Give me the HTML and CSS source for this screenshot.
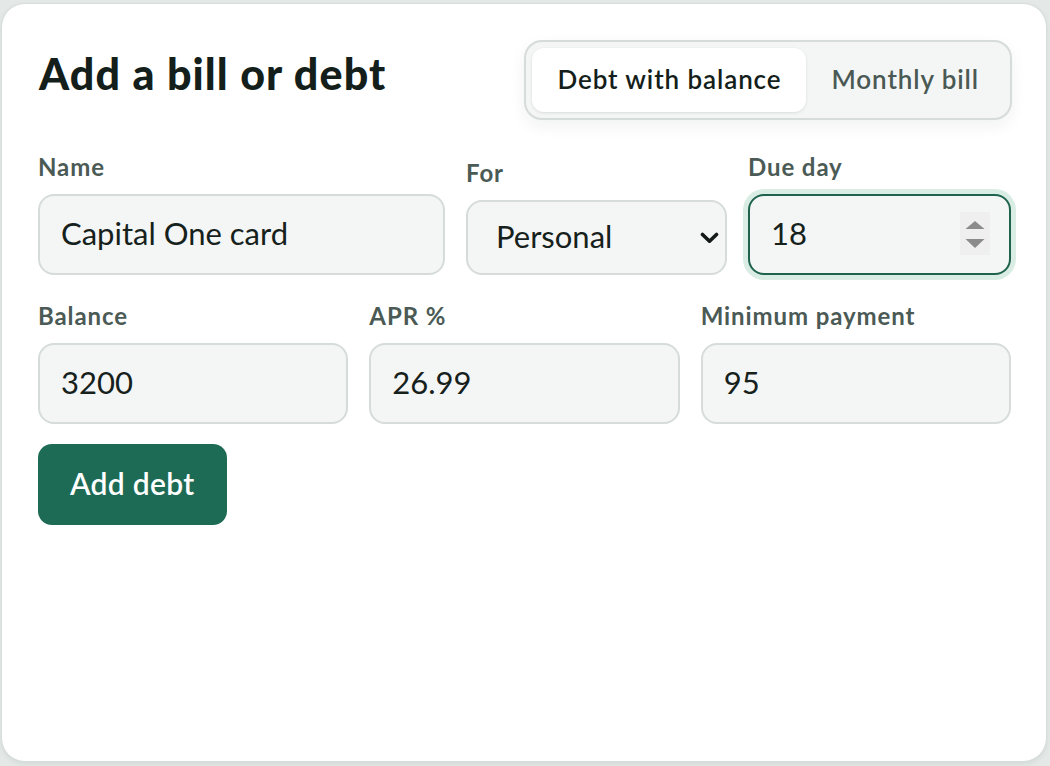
FILE: index.html
```html
<!DOCTYPE html>
<html lang="en">
<head>
<meta charset="utf-8">
<title>Add a bill or debt</title>
<link rel="stylesheet" href="styles.css">
</head>
<body>
<div class="card">
  <div class="header">
    <h1 class="title">Add a bill or debt</h1>
    <div class="seg">
      <button class="seg-btn active" type="button">Debt with balance</button>
      <button class="seg-btn" type="button">Monthly bill</button>
    </div>
  </div>

  <div class="row row-top">
    <div class="field">
      <label class="label" for="name">Name</label>
      <input class="input" id="name" type="text" value="Capital One card">
    </div>
    <div class="field">
      <label class="label" for="for">For</label>
      <div class="select-wrap">
        <select class="input select" id="for">
          <option>Personal</option>
          <option>Business</option>
        </select>
        <svg class="chev" width="19" height="12" viewBox="0 0 19 12" aria-hidden="true">
          <path d="M2.5 2.5 L9.5 9.2 L16.5 2.5" fill="none" stroke="#141a17" stroke-width="3.6" stroke-linecap="round" stroke-linejoin="round"/>
        </svg>
      </div>
    </div>
    <div class="field">
      <label class="label" for="due">Due day</label>
      <div class="num-wrap">
        <input class="input input-focus" id="due" type="text" value="18">
        <svg class="spin" width="30" height="43" viewBox="0 0 30 43" aria-hidden="true">
          <rect x="0" y="0" width="30" height="43" fill="#efefef"/>
          <polygon points="5.5,17 24.5,17 15,9" fill="#8b8b8b"/>
          <polygon points="5.5,27 24.5,27 15,36" fill="#8b8b8b"/>
        </svg>
      </div>
    </div>
  </div>

  <div class="row row-bottom">
    <div class="field">
      <label class="label" for="bal">Balance</label>
      <input class="input" id="bal" type="text" value="3200">
    </div>
    <div class="field">
      <label class="label" for="apr">APR %</label>
      <input class="input" id="apr" type="text" value="26.99">
    </div>
    <div class="field">
      <label class="label" for="min">Minimum payment</label>
      <input class="input" id="min" type="text" value="95">
    </div>
  </div>

  <button class="primary" type="button">Add debt</button>
</div>
</body>
</html>
```

FILE: styles.css
```css
* {
  box-sizing: border-box;
}

html, body {
  margin: 0;
  padding: 0;
}

body {
  background: #e4e9e7;
  font-family: "Lato", "Noto Sans", sans-serif;
  color: #15201b;
  width: 1050px;
  height: 766px;
  overflow: hidden;
}

.card {
  margin: 3px 0 0 1px;
  width: 1046px;
  height: 759px;
  background: #ffffff;
  border: 1px solid #d6ddda;
  border-radius: 24px;
  box-shadow: 0 2px 5px rgba(30, 50, 40, 0.08);
  padding: 36px 35px 36px 36px;
}

.header {
  display: flex;
  justify-content: space-between;
  align-items: flex-start;
}

.title {
  margin: 8px 0 0 1px;
  font-size: 43px;
  font-weight: 900;
  letter-spacing: 1.1px;
  line-height: 1.2;
  color: #141e1a;
}

.seg {
  display: flex;
  height: 80px;
  padding: 6px;
  margin-right: -1px;
  background: #f4f6f5;
  border: 2px solid #d5dcd9;
  border-radius: 18px;
  box-shadow: 0 6px 16px rgba(20, 40, 30, 0.06);
}

.seg-btn {
  border: 0;
  background: transparent;
  font-family: inherit;
  font-size: 26px;
  font-weight: 600;
  letter-spacing: 0.9px;
  color: #4a5954;
  padding: 0 25px 2px;
  border-radius: 12px;
  height: 64px;
}

.seg-btn.active {
  background: #ffffff;
  color: #141e1a;
  box-shadow: 0 1px 3px rgba(20, 40, 30, 0.12);
}

.row {
  display: grid;
  column-gap: 21px;
  align-items: end;
}

.row-top {
  grid-template-columns: 407px 261px 1fr;
  margin-top: 32px;
}

.row-bottom {
  grid-template-columns: 1fr 1fr 1fr;
  margin-top: 26px;
}

.field {
  display: flex;
  flex-direction: column;
}

.label {
  display: block;
  font-size: 24px;
  font-weight: 700;
  line-height: 29px;
  letter-spacing: 0.9px;
  color: #4b5a55;
  margin-bottom: 13px;
}

.input {
  display: block;
  width: 100%;
  height: 81px;
  margin: 0;
  padding: 0 21px 4px;
  font-family: inherit;
  font-size: 31px;
  font-weight: 400;
  color: #16211c;
  background: #f4f6f5;
  border: 2px solid #d5dcd9;
  border-radius: 16px;
  outline: none;
}

.select-wrap,
.num-wrap {
  position: relative;
}

.select {
  height: 75px;
  padding-left: 28px;
  -webkit-appearance: none;
  appearance: none;
}

.chev {
  position: absolute;
  right: 8px;
  top: 32px;
}

.input-focus {
  border-color: #1f634e;
  box-shadow: 0 0 0 5px #d9ede5;
}

.spin {
  position: absolute;
  right: 21px;
  top: 18px;
}

.primary {
  margin-top: 20px;
  height: 81px;
  padding: 0 32px 3px;
  border: 0;
  border-radius: 14px;
  background: #1e6b55;
  color: #ffffff;
  font-family: inherit;
  font-size: 30px;
  font-weight: 600;
  letter-spacing: 0.3px;
}
```
